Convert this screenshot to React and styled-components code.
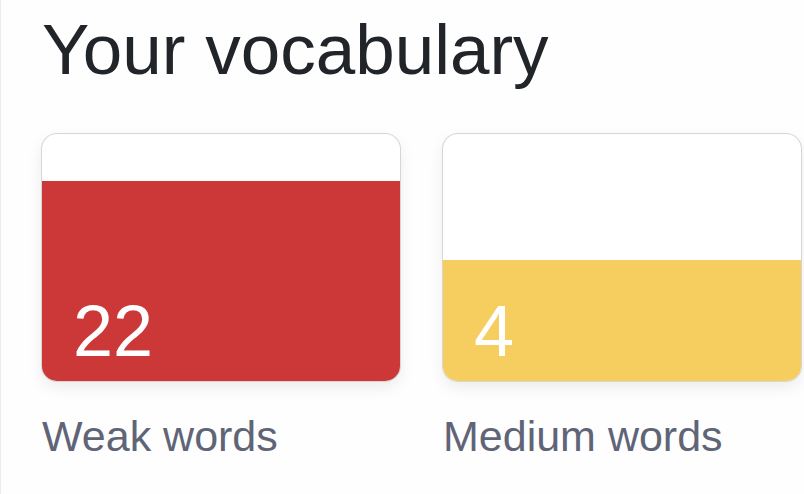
import React from "react";
import styled, { createGlobalStyle } from "styled-components";

const GlobalStyle = createGlobalStyle`
	html, body {
		margin: 0;
		padding: 0;
		background: #fefefe;
		font-family: "Liberation Sans", Arial, sans-serif;
	}
`;

const levels = [
	{ count: 22, label: "Weak words", color: "#cc3737", fill: 200 },
	{ count: 4, label: "Medium words", color: "#f6ce5f", fill: 121 },
];

function App() {
	return (
		<Page>
			<GlobalStyle />
			<Title>Your vocabulary</Title>
			<Grid>
				{levels.map((level) => (
					<Level key={level.label}>
						<Card>
							<Fill $color={level.color} style={{ height: level.fill }}>
								<Count>{level.count}</Count>
							</Fill>
						</Card>
						<Label>{level.label}</Label>
					</Level>
				))}
			</Grid>
		</Page>
	);
}

export default App;

const Page = styled.div`
	box-sizing: border-box;
	width: 804px;
	height: 494px;
	overflow: hidden;
	padding: 14px 0 0 41px;
	border-left: 1px solid #ececec;
`;

const Title = styled.h1`
	margin: 0 0 49px 0;
	font-size: 71px;
	line-height: 1;
	font-weight: 400;
	color: #212529;
`;

const Grid = styled.div`
	display: grid;
	grid-template-columns: 358px 358px;
	gap: 43px;
`;

const Level = styled.div`
	display: flex;
	flex-direction: column;
`;

const Card = styled.div`
	height: 247px;
	border-radius: 15px;
	background: #fff;
	overflow: hidden;
	display: flex;
	flex-direction: column;
	justify-content: flex-end;
	box-shadow: 0 0 0 1px #d6d6d6, 0 6px 16px rgba(0, 0, 0, 0.08);
`;

const Fill = styled.div`
	background: ${(p) => p.$color};
	display: flex;
	align-items: flex-end;
	padding: 0 0 14px 31px;
	box-sizing: border-box;
`;

const Count = styled.span`
	font-size: 72px;
	line-height: 1;
	color: #fff;
`;

const Label = styled.div`
	margin-top: 34px;
	font-size: 43px;
	line-height: 1;
	color: #5f6577;
`;
